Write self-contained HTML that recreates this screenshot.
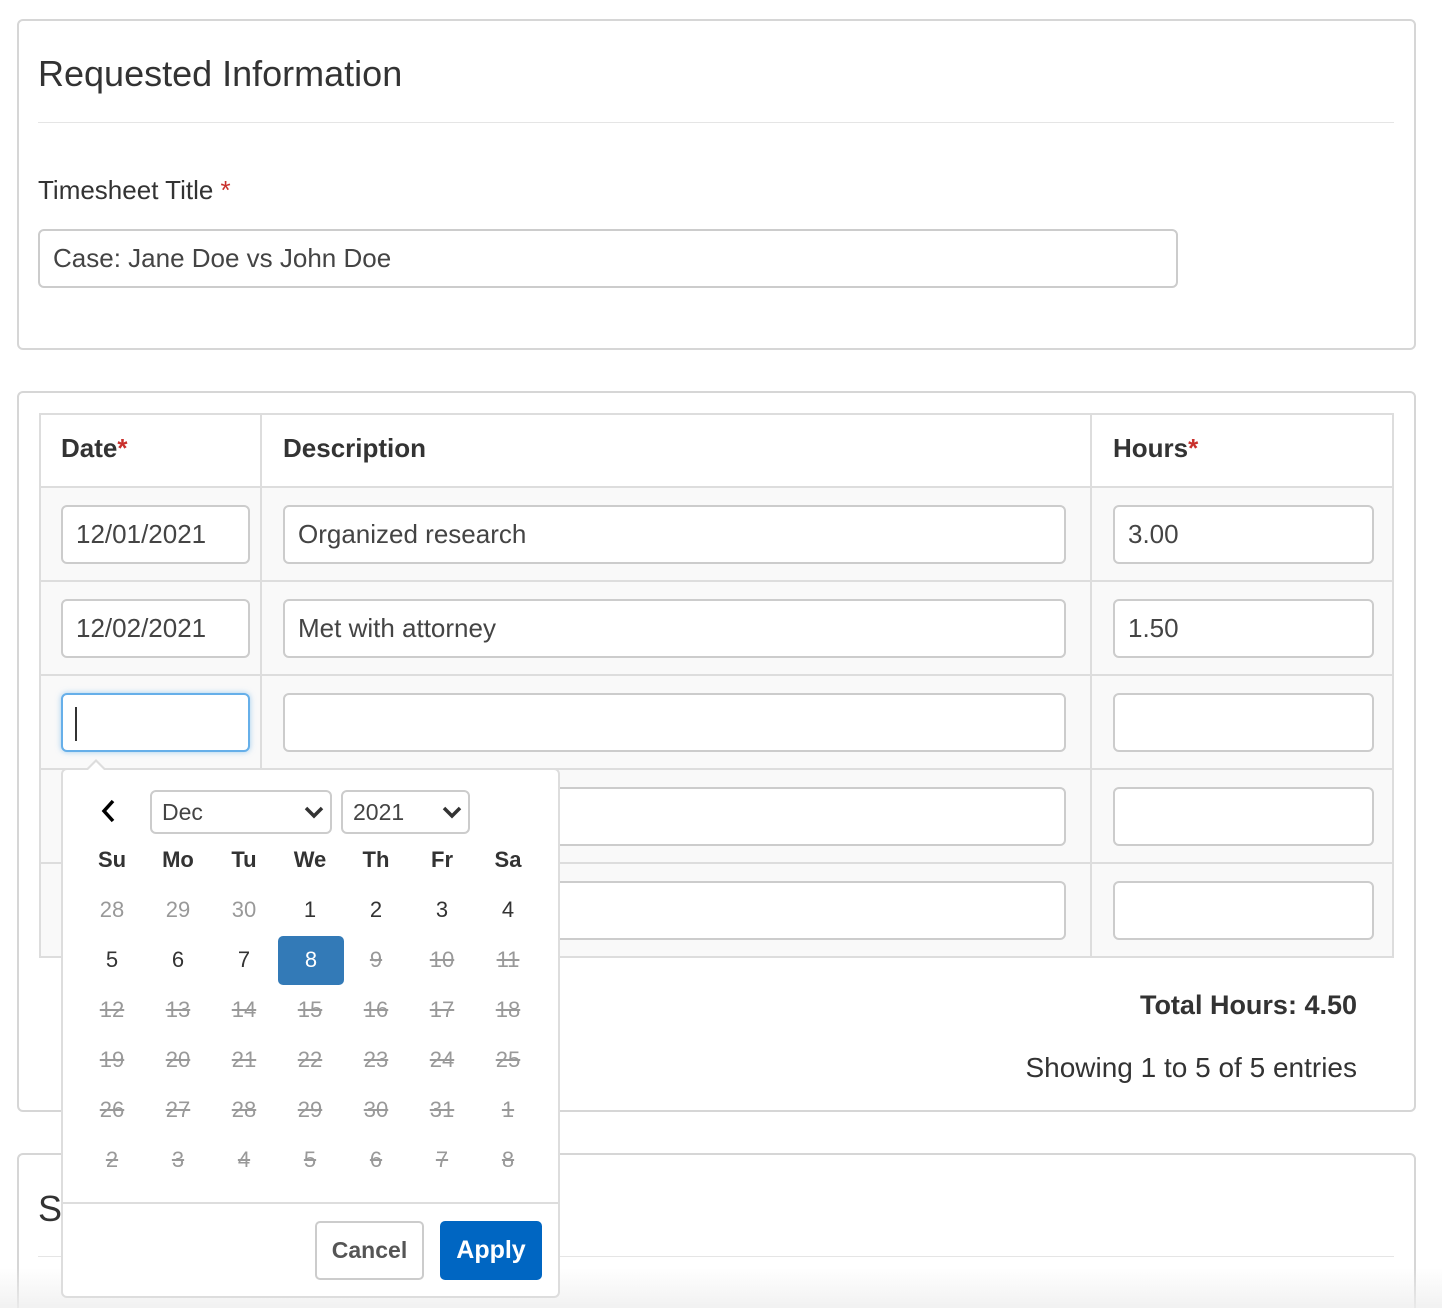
<!DOCTYPE html>
<html style="overflow:hidden;height:1308px"><head><style>
*{box-sizing:border-box}
body{margin:0;width:1442px;height:1308px;overflow:hidden;background:#fff;font-family:"Liberation Sans",sans-serif;color:#333;position:relative}
.abs{position:absolute}
.panel{position:absolute;border:2px solid #d6d6d6;border-radius:6px;background:#fff}
.inp{position:absolute;border:2px solid #ccc;border-radius:6px;background:#fff;font-size:26px;padding-left:13px;line-height:54px;color:#444}
.d{position:absolute;width:66px;text-align:center;font-size:22px;line-height:50px;height:50px}
.g{color:#999}
.s{color:#999;text-decoration:line-through}
</style></head><body>
<div class="panel" style="left:17px;top:19px;width:1399px;height:331px"></div>
<div class="abs" style="left:38px;top:53px;font-size:36px;color:#333">Requested Information</div>
<div class="abs" style="left:38px;top:122px;width:1356px;height:1px;background:#e5e5e5"></div>
<div class="abs" style="left:38px;top:175px;font-size:26px;color:#333">Timesheet Title <span style="color:#c9302c">*</span></div>
<div class="inp" style="left:38px;top:229px;width:1140px;height:59px">Case: Jane Doe vs John Doe</div>

<div class="panel" style="left:17px;top:391px;width:1399px;height:721px"></div>
<div class="abs" style="left:39px;top:413px;width:1355px;height:545px;border:2px solid #ddd;background:#f9f9f9"></div>
<div class="abs" style="left:41px;top:415px;width:1351px;height:72px;background:#fff"></div>
<div class="abs" style="left:39px;top:486px;width:1355px;height:2px;background:#ddd"></div>
<div class="abs" style="left:39px;top:580px;width:1355px;height:2px;background:#ddd"></div>
<div class="abs" style="left:39px;top:674px;width:1355px;height:2px;background:#ddd"></div>
<div class="abs" style="left:39px;top:768px;width:1355px;height:2px;background:#ddd"></div>
<div class="abs" style="left:39px;top:862px;width:1355px;height:2px;background:#ddd"></div>
<div class="abs" style="left:260px;top:413px;width:2px;height:545px;background:#ddd"></div>
<div class="abs" style="left:1090px;top:413px;width:2px;height:545px;background:#ddd"></div>
<div class="abs" style="left:61px;top:433px;font-size:26px;font-weight:bold">Date<span style="color:#c9302c">*</span></div>
<div class="abs" style="left:283px;top:433px;font-size:26px;font-weight:bold">Description</div>
<div class="abs" style="left:1113px;top:433px;font-size:26px;font-weight:bold">Hours<span style="color:#c9302c">*</span></div>

<div class="inp" style="left:61px;top:505px;width:189px;height:59px">12/01/2021</div>
<div class="inp" style="left:283px;top:505px;width:783px;height:59px">Organized research</div>
<div class="inp" style="left:1113px;top:505px;width:261px;height:59px">3.00</div>
<div class="inp" style="left:61px;top:599px;width:189px;height:59px">12/02/2021</div>
<div class="inp" style="left:283px;top:599px;width:783px;height:59px">Met with attorney</div>
<div class="inp" style="left:1113px;top:599px;width:261px;height:59px">1.50</div>
<div class="inp" style="left:61px;top:693px;width:189px;height:59px;border-color:#66afe9;box-shadow:0 0 6px rgba(102,175,233,.6)"><div class="abs" style="left:12px;top:12px;width:2px;height:34px;background:#333"></div></div>
<div class="inp" style="left:283px;top:693px;width:783px;height:59px"></div>
<div class="inp" style="left:1113px;top:693px;width:261px;height:59px"></div>
<div class="inp" style="left:283px;top:787px;width:783px;height:59px"></div>
<div class="inp" style="left:1113px;top:787px;width:261px;height:59px"></div>
<div class="inp" style="left:283px;top:881px;width:783px;height:59px"></div>
<div class="inp" style="left:1113px;top:881px;width:261px;height:59px"></div>

<div class="abs" style="right:85px;top:990px;font-size:27px;font-weight:bold;color:#333">Total Hours: 4.50</div>
<div class="abs" style="right:85px;top:1052px;font-size:28px;color:#333">Showing 1 to 5 of 5 entries</div>

<div class="panel" style="left:17px;top:1153px;width:1399px;height:180px"></div>
<div class="abs" style="left:38px;top:1188px;font-size:36px">S</div>
<div class="abs" style="left:38px;top:1256px;width:1356px;height:1px;background:#e5e5e5"></div>
<div class="abs" style="left:0;top:1268px;width:1442px;height:40px;background:linear-gradient(rgba(238,238,238,0),rgba(238,238,238,.8))"></div>

<!-- datepicker -->
<div class="abs" style="left:61px;top:768px;width:499px;height:530px;border:2px solid #ddd;border-radius:6px;background:#fff"></div>
<div class="abs" style="left:85px;top:759px;width:0;height:0;border-left:11px solid transparent;border-right:11px solid transparent;border-bottom:11px solid #ddd"></div>
<div class="abs" style="left:87px;top:762px;width:0;height:0;border-left:9px solid transparent;border-right:9px solid transparent;border-bottom:9px solid #fff"></div>
<svg class="abs" style="left:98px;top:798px" width="20" height="26"><path d="M15 3 L6 13 L15 23" fill="none" stroke="#000" stroke-width="3.5"/></svg>
<div class="abs" style="left:150px;top:790px;width:182px;height:44px;border:2px solid #ccc;border-radius:6px;font-size:23px;line-height:40px;padding-left:10px;color:#444">Dec</div>
<svg class="abs" style="left:303px;top:804px" width="22" height="16"><path d="M3 4 L11 12 L19 4" fill="none" stroke="#333" stroke-width="3.5"/></svg>
<div class="abs" style="left:341px;top:790px;width:129px;height:44px;border:2px solid #ccc;border-radius:6px;font-size:23px;line-height:40px;padding-left:10px;color:#444">2021</div>
<svg class="abs" style="left:441px;top:804px" width="22" height="16"><path d="M3 4 L11 12 L19 4" fill="none" stroke="#333" stroke-width="3.5"/></svg>

<div class="abs" style="left:0;top:0">
<div class="d" style="left:79px;top:835px;font-weight:bold">Su</div><div class="d" style="left:145px;top:835px;font-weight:bold">Mo</div><div class="d" style="left:211px;top:835px;font-weight:bold">Tu</div><div class="d" style="left:277px;top:835px;font-weight:bold">We</div><div class="d" style="left:343px;top:835px;font-weight:bold">Th</div><div class="d" style="left:409px;top:835px;font-weight:bold">Fr</div><div class="d" style="left:475px;top:835px;font-weight:bold">Sa</div>

<div class="d g" style="left:79px;top:885px">28</div><div class="d g" style="left:145px;top:885px">29</div><div class="d g" style="left:211px;top:885px">30</div><div class="d" style="left:277px;top:885px">1</div><div class="d" style="left:343px;top:885px">2</div><div class="d" style="left:409px;top:885px">3</div><div class="d" style="left:475px;top:885px">4</div>

<div class="d" style="left:79px;top:935px">5</div><div class="d" style="left:145px;top:935px">6</div><div class="d" style="left:211px;top:935px">7</div><div class="d" style="left:278px;top:936px;background:#337ab7;color:#fff;border-radius:5px;height:49px;line-height:48px">8</div><div class="d s" style="left:343px;top:935px">9</div><div class="d s" style="left:409px;top:935px">10</div><div class="d s" style="left:475px;top:935px">11</div>

<div class="d s" style="left:79px;top:985px">12</div><div class="d s" style="left:145px;top:985px">13</div><div class="d s" style="left:211px;top:985px">14</div><div class="d s" style="left:277px;top:985px">15</div><div class="d s" style="left:343px;top:985px">16</div><div class="d s" style="left:409px;top:985px">17</div><div class="d s" style="left:475px;top:985px">18</div>

<div class="d s" style="left:79px;top:1035px">19</div><div class="d s" style="left:145px;top:1035px">20</div><div class="d s" style="left:211px;top:1035px">21</div><div class="d s" style="left:277px;top:1035px">22</div><div class="d s" style="left:343px;top:1035px">23</div><div class="d s" style="left:409px;top:1035px">24</div><div class="d s" style="left:475px;top:1035px">25</div>

<div class="d s" style="left:79px;top:1085px">26</div><div class="d s" style="left:145px;top:1085px">27</div><div class="d s" style="left:211px;top:1085px">28</div><div class="d s" style="left:277px;top:1085px">29</div><div class="d s" style="left:343px;top:1085px">30</div><div class="d s" style="left:409px;top:1085px">31</div><div class="d s" style="left:475px;top:1085px">1</div>

<div class="d s" style="left:79px;top:1135px">2</div><div class="d s" style="left:145px;top:1135px">3</div><div class="d s" style="left:211px;top:1135px">4</div><div class="d s" style="left:277px;top:1135px">5</div><div class="d s" style="left:343px;top:1135px">6</div><div class="d s" style="left:409px;top:1135px">7</div><div class="d s" style="left:475px;top:1135px">8</div>
</div>
<div class="abs" style="left:63px;top:1202px;width:495px;height:2px;background:#ddd"></div>
<div class="abs" style="left:315px;top:1221px;width:109px;height:59px;border:2px solid #ccc;border-radius:5px;font-size:23px;font-weight:bold;color:#555;text-align:center;line-height:55px;background:#fff">Cancel</div>
<div class="abs" style="left:440px;top:1221px;width:102px;height:59px;background:#0066c2;border-radius:5px;font-size:25px;font-weight:bold;color:#fff;text-align:center;line-height:59px">Apply</div>
</body></html>
